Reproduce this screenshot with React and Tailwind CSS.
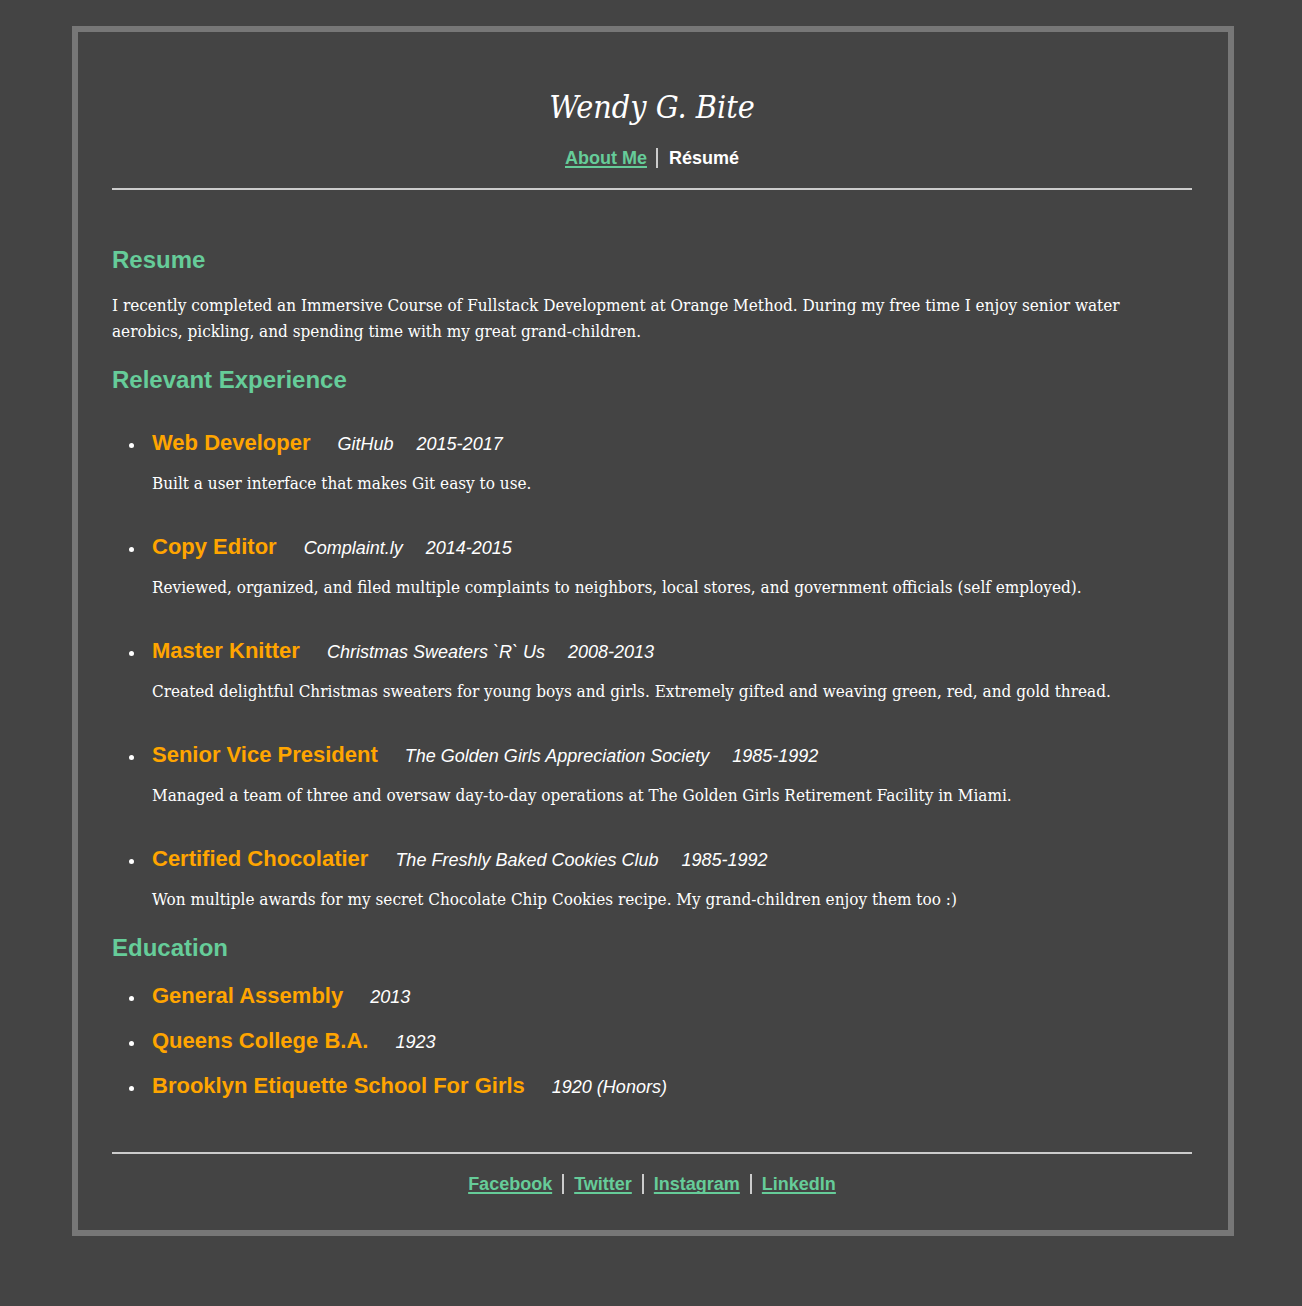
const jobs = [
  ['Web Developer', 'GitHub', '2015-2017', 'Built a user interface that makes Git easy to use.'],
  ['Copy Editor', 'Complaint.ly', '2014-2015', 'Reviewed, organized, and filed multiple complaints to neighbors, local stores, and government officials (self employed).'],
  ['Master Knitter', 'Christmas Sweaters `R` Us', '2008-2013', 'Created delightful Christmas sweaters for young boys and girls. Extremely gifted and weaving green, red, and gold thread.'],
  ['Senior Vice President', 'The Golden Girls Appreciation Society', '1985-1992', 'Managed a team of three and oversaw day-to-day operations at The Golden Girls Retirement Facility in Miami.'],
  ['Certified Chocolatier', 'The Freshly Baked Cookies Club', '1985-1992', 'Won multiple awards for my secret Chocolate Chip Cookies recipe. My grand-children enjoy them too :)'],
];
const schools = [
  ['General Assembly', '2013'],
  ['Queens College B.A.', '1923'],
  ['Brooklyn Etiquette School For Girls', '1920 (Honors)'],
];
const links = ['Facebook', 'Twitter', 'Instagram', 'LinkedIn'];
const heading = 'text-2xl font-bold leading-7 text-[#66cc99]';
const prose = "font-['DejaVu_Serif_Condensed','Liberation_Serif',serif] text-[17px] leading-[26px]";
const link = 'text-[#66cc99] underline decoration-2 underline-offset-2 [text-decoration-skip-ink:none]';

function Entry({ title, details }) {
  return (
    <div className="flex items-baseline gap-[23px] leading-7">
      <h3 className="pr-1 text-[22px] font-bold text-[#ffa500]">{title}</h3>
      {details.map((d) => (
        <em key={d} className="text-lg leading-7">{d}</em>
      ))}
    </div>
  );
}

export default function App() {
  return (
    <div className="min-h-screen bg-[#444444] px-[70px] pt-[26px] pb-[70px] font-['Liberation_Sans',Arial,sans-serif] text-lg text-white">
      <div className="ml-0.5 -mr-0.5 border-6 border-[#777777] pr-9 pl-[34px] pb-9">
        <header className="border-b-2 border-[#cccccc] pt-[54px] pb-5 text-center">
          <h1 className="font-['DejaVu_Serif_Condensed','Liberation_Serif',serif] text-[32px] leading-[42px] italic">Wendy G. Bite</h1>
          <nav className="mt-5 flex justify-center leading-5 font-bold">
            <span className="pr-[9px]"><a href="#about" className={link}>About Me</a></span>
            <span className="border-l-2 border-[#cccccc] pl-[11px]">Résumé</span>
          </nav>
        </header>
        <main className="pt-14">
          <h2 className={heading}>Resume</h2>
          <p className={prose + ' mt-[18px]'}>
            I recently completed an Immersive Course of Fullstack Development at Orange Method. During my free time I enjoy senior water aerobics, pickling, and spending time with my great grand-children.
          </p>
          <h2 className={heading + ' mt-[22px]'}>Relevant Experience</h2>
          <ul className="mt-[35px] list-disc space-y-[37px] pl-[34px]">
            {jobs.map(([title, company, years, text]) => (
              <li key={title} className="pl-1.5">
                <Entry title={title} details={[company, years]} />
                <p className={prose + ' mt-3'}>{text}</p>
              </li>
            ))}
          </ul>
          <h2 className={heading + ' mt-[22px]'}>Education</h2>
          <ul className="mt-5 list-disc space-y-4 pl-[34px]">
            {schools.map(([title, year]) => (
              <li key={title} className="pl-1.5"><Entry title={title} details={[year]} /></li>
            ))}
          </ul>
        </main>
        <footer className="mt-[51px] border-t-2 border-[#cccccc] pt-5">
          <nav className="flex justify-center leading-5 font-bold">
            {links.map((name) => (
              <span key={name} className="border-l-2 border-[#cccccc] px-2.5 first:border-l-0">
                <a href={'#' + name} className={link}>{name}</a>
              </span>
            ))}
          </nav>
        </footer>
      </div>
    </div>
  );
}
